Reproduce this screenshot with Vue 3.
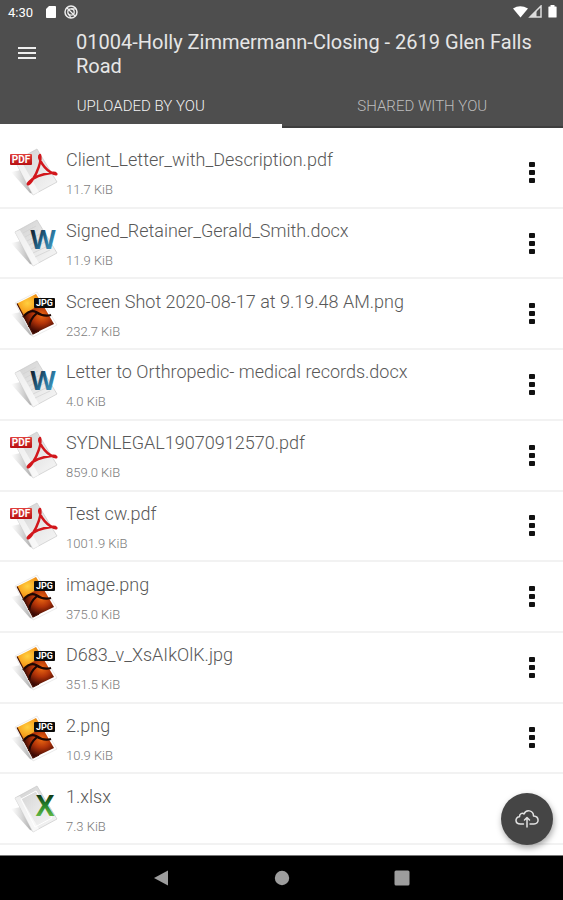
<script setup>
import { ref } from 'vue'

const activeTab = ref('uploaded')
const tabs = [
  { id: 'uploaded', label: 'UPLOADED BY YOU' },
  { id: 'shared', label: 'SHARED WITH YOU' },
]

const files = [
  { name: 'Client_Letter_with_Description.pdf', size: '11.7 KiB', kind: 'pdf' },
  { name: 'Signed_Retainer_Gerald_Smith.docx', size: '11.9 KiB', kind: 'doc' },
  { name: 'Screen Shot 2020-08-17 at 9.19.48 AM.png', size: '232.7 KiB', kind: 'image' },
  { name: 'Letter to Orthropedic- medical records.docx', size: '4.0 KiB', kind: 'doc' },
  { name: 'SYDNLEGAL19070912570.pdf', size: '859.0 KiB', kind: 'pdf' },
  { name: 'Test cw.pdf', size: '1001.9 KiB', kind: 'pdf' },
  { name: 'image.png', size: '375.0 KiB', kind: 'image' },
  { name: 'D683_v_XsAIkOlK.jpg', size: '351.5 KiB', kind: 'image' },
  { name: '2.png', size: '10.9 KiB', kind: 'image' },
  { name: '1.xlsx', size: '7.3 KiB', kind: 'sheet', noMenu: true },
]
</script>

<template>
  <div class="screen">
    <svg class="defs" width="0" height="0" aria-hidden="true">
      <defs>
        <linearGradient id="paper" x1="0" y1="0" x2="1" y2="1">
          <stop offset="0" stop-color="#cfcfcf" />
          <stop offset="0.5" stop-color="#e6e6e6" />
          <stop offset="1" stop-color="#f8f8f8" />
        </linearGradient>
        <linearGradient id="shade" x1="0" y1="0" x2="1" y2="0">
          <stop offset="0" stop-color="#999" stop-opacity="0" />
          <stop offset="1" stop-color="#777" stop-opacity="0.7" />
        </linearGradient>
        <linearGradient id="red" x1="0" y1="0" x2="0" y2="1">
          <stop offset="0" stop-color="#e0403c" />
          <stop offset="1" stop-color="#b80f12" />
        </linearGradient>
        <linearGradient id="blue" x1="0" y1="0" x2="1" y2="1">
          <stop offset="0.2" stop-color="#14283a" />
          <stop offset="0.55" stop-color="#266f98" />
          <stop offset="0.9" stop-color="#49a6cb" />
        </linearGradient>
        <linearGradient id="green" x1="0" y1="0" x2="0" y2="1">
          <stop offset="0.25" stop-color="#123c18" />
          <stop offset="0.5" stop-color="#22822a" />
          <stop offset="0.8" stop-color="#62b845" />
        </linearGradient>
        <radialGradient id="sunset" cx="0.4" cy="0.4" r="0.75">
          <stop offset="0" stop-color="#ffd040" />
          <stop offset="0.5" stop-color="#f8a01c" />
          <stop offset="1" stop-color="#c4560d" />
        </radialGradient>
        <radialGradient id="ember" cx="0.6" cy="0.35" r="0.6">
          <stop offset="0" stop-color="#ee6a12" />
          <stop offset="0.5" stop-color="#b03208" />
          <stop offset="1" stop-color="#3a0803" />
        </radialGradient>
      </defs>
    </svg>

    <header class="header">
      <div class="status">
        <span class="time">4:30</span>
        <svg class="sd" width="12" height="14" viewBox="0 0 12 14"><path d="M4 1h6.200q.8 0 .8.800v10.400q0 .8-.8.800H1.800q-.8 0-.8-.8V4z" fill="#fff" /></svg>
        <svg width="14" height="14" viewBox="0 0 14 14" fill="none" stroke="#eee">
          <circle cx="7" cy="7" r="6" stroke-width="1.500" />
          <circle cx="7" cy="7" r="3.200" stroke-width="1.300" />
          <path d="M3 3l8 8M7 3.800h5M4.200 8.500L7 13" stroke-width="1.200" />
        </svg>
        <span class="spacer"></span>
        <svg width="44" height="14" viewBox="0 0 44 14">
          <path d="M0 3.500Q7 -1 15 3.500L7.500 12.500z" fill="#fff" />
          <path d="M17 12L28 1v11z" fill="none" stroke="#ddd" stroke-width="1.500" />
          <path d="M17 12L23.500 5.500V12z" fill="#ddd" />
          <path d="M36 1.500h1.500V0h4v1.500H43q.6 0 .6.600V12q0 .6-.6.600h-7q-.6 0-.6-.6V2.100q0-.6.600-.6z" fill="#fff" />
        </svg>
      </div>
      <div class="bar">
        <button class="menu" type="button" aria-label="Menu">
          <span></span><span></span><span></span>
        </button>
        <h1 class="title">01004-Holly Zimmermann-Closing - 2619 Glen Falls Road</h1>
      </div>
      <nav class="tabs">
        <button
          v-for="tab in tabs"
          :key="tab.id"
          type="button"
          class="tab"
          :class="{ active: tab.id === activeTab }"
          @click="activeTab = tab.id"
        >{{ tab.label }}</button>
      </nav>
    </header>

    <main class="content">
      <ul class="list">
        <li v-for="file in files" :key="file.name" class="row">
          <svg class="file-icon" width="50" height="50" viewBox="0 0 50 50" aria-hidden="true">
            <path d="M2 25L12 23L25 47L21 46z" fill="url(#shade)" />
            <template v-if="file.kind === 'image'">
              <path d="M6 14L28 3L48 36L24 48z" fill="#fff" stroke="#ddd" stroke-width="0.600" />
              <path d="M8 14.500L27 5L34 16L15 28z" fill="url(#sunset)" />
              <path d="M14 27Q24 18 34 16L45 35L24 45z" fill="url(#ember)" />
              <path d="M14 28Q21 20 27 23Q34 28 42 26M28 24Q21 30 20 38" fill="none" stroke="#1d0703" stroke-width="2.200" />
              <path d="M8 14.500L24 45L30 42" fill="none" stroke="#4a1306" stroke-width="1.200" />
              <rect x="25" y="9" width="21" height="10" rx="1" fill="#0b0b0b" />
              <text x="35.500" y="17" class="tag">JPG</text>
            </template>
            <template v-else>
              <path d="M6 14L28 2L48 35L24 48z" fill="url(#paper)" stroke="#c9c9c9" stroke-width="0.700" />
              <path d="M6 14L24 48L30 45L11 12z" fill="#fff" opacity="0.600" />
              <path v-if="file.kind === 'doc'" d="M14 15L27 8M16 19L29 12M18 23L31 16M20 27L33 20M22 31L36 24M24 35L39 28M26 39L41 32" stroke="#d0d0d0" stroke-width="0.700" />
              <path v-if="file.kind === 'sheet'" d="M12 15L27 7L43 34L26 43z" fill="none" stroke="#fff" stroke-width="1" />
            </template>
            <template v-if="file.kind === 'pdf'">
              <rect x="1" y="7" width="22" height="11" rx="1" fill="url(#red)" />
              <text x="12" y="16" class="tag pdf">PDF</text>
              <path d="M31 8C28 10 35 23 45 27C49 28.500 48 25 42 26C34 27 25 30 20 35C17 38 20 39 24 32C28 26 33 14 31 8z" fill="none" stroke="#d2171c" stroke-width="2.400" stroke-linejoin="round" />
            </template>
            <text v-if="file.kind === 'doc'" x="34" y="31" class="letter word">W</text>
            <text v-if="file.kind === 'sheet'" x="36" y="32" class="letter excel">X</text>
          </svg>
          <div class="info">
            <span class="name">{{ file.name }}</span>
            <span class="size">{{ file.size }}</span>
          </div>
          <button v-if="!file.noMenu" class="more" type="button" :aria-label="'Options for ' + file.name">
            <span></span><span></span><span></span>
          </button>
        </li>
      </ul>
      <button class="fab" type="button" aria-label="Upload">
        <svg width="24" height="20" viewBox="0 0 24 20" fill="none" stroke="#e2e2e2" stroke-width="1.500" stroke-linecap="round" stroke-linejoin="round">
          <path d="M8.500 15H5.500C-.5 15-.2 7.800 4.500 7.800C4.300 4.500 7.500 3.600 9 5C11 0 18.500 1 18.500 7C24.500 7.300 24.500 15 19 15H15" />
          <path d="M12 18V9M9.500 11L12 8.500L14.500 11" />
        </svg>
      </button>
    </main>

    <footer class="navbar">
      <button type="button" aria-label="Back"><svg width="16" height="16" viewBox="0 0 16 16"><path d="M0 8L14 .5v15z" fill="#9d9d9d" /></svg></button>
      <button type="button" aria-label="Home"><svg width="16" height="16" viewBox="0 0 16 16"><circle cx="8" cy="8" r="7.200" fill="#9d9d9d" /></svg></button>
      <button type="button" aria-label="Recent apps"><svg width="16" height="16" viewBox="0 0 16 16"><rect x="0.500" y="0.500" width="15" height="15" rx="1.500" fill="#9d9d9d" /></svg></button>
    </footer>
  </div>
</template>

<style>
body {
  margin: 0;
  background: #fff;
}
</style>

<style scoped>
.screen {
  display: flex;
  flex-direction: column;
  min-height: 100vh;
  font-family: Roboto, "Liberation Sans", sans-serif;
  background: #fff;
}
.defs {
  position: absolute;
}
button {
  padding: 0;
  border: 0;
  background: none;
  font: inherit;
  color: inherit;
  cursor: pointer;
}
.header {
  background: #4e4e4e;
  color: #e6e6e6;
}
.status {
  display: flex;
  align-items: center;
  height: 24px;
  padding: 0 6px 0 8px;
}
.time {
  width: 37px;
  font-size: 13px;
  color: #fff;
}
.sd {
  margin-right: 7px;
}
.spacer {
  flex: 1;
}
.bar {
  display: flex;
  align-items: flex-start;
  padding: 6px 16px 8px 18px;
}
.menu {
  display: flex;
  flex-direction: column;
  gap: 3px;
  width: 18px;
  margin: 17px 40px 0 0;
}
.menu span {
  height: 2px;
  background: #eee;
}
.title {
  flex: 1;
  margin: 0;
  font-size: 20px;
  line-height: 24px;
  font-weight: 400;
}
.tabs {
  display: flex;
}
.tab {
  flex: 1;
  height: 42px;
  border-bottom: 2px solid #3e3e3e;
  font-size: 15px;
  font-weight: 300;
  color: #bdbdbd;
}
.tab.active {
  padding-top: 2px;
  border-bottom: 4px solid #fff;
  color: #f2f2f2;
}
.content {
  position: relative;
  display: flex;
  flex: 1;
  flex-direction: column;
}
.list {
  display: flex;
  flex: 1;
  flex-direction: column;
  margin: 0;
  padding: 10px 0;
  list-style: none;
}
.row {
  display: flex;
  flex: 1;
  align-items: center;
  box-sizing: border-box;
  min-height: 60px;
  padding: 0 27px 0 9px;
  border-bottom: 2px solid #f2f2f2;
}
.file-icon {
  flex: none;
}
.tag {
  font-size: 9px;
  font-weight: 700;
  fill: #fff;
  text-anchor: middle;
}
.pdf {
  font-size: 10px;
}
.letter {
  font-family: "Open Sans", sans-serif;
  font-weight: 700;
  text-anchor: middle;
}
.word {
  font-size: 26px;
  fill: url(#blue);
}
.excel {
  font-size: 28px;
  fill: url(#green);
}
.info {
  display: flex;
  flex: 1;
  flex-direction: column;
  gap: 10px;
  padding: 2px 0 0 7px;
  font-weight: 300;
}
.name {
  font-size: 18px;
  line-height: 24px;
  color: #585858;
}
.size {
  font-size: 13px;
  line-height: 16px;
  color: #7c7c7c;
}
.more {
  display: flex;
  flex-direction: column;
  align-items: center;
  gap: 3px;
  width: 8px;
}
.more span {
  width: 6px;
  height: 5px;
  border-radius: 1px;
  background: #111;
}
.fab {
  position: absolute;
  right: 10px;
  bottom: 10px;
  display: flex;
  align-items: center;
  justify-content: center;
  width: 52px;
  height: 52px;
  border-radius: 50%;
  background: #454545;
  box-shadow: 1px 3px 6px rgba(0, 0, 0, 0.35);
}
.navbar {
  display: flex;
  align-items: center;
  justify-content: center;
  gap: 104px;
  height: 44px;
  border-top: 1px solid #777;
  background: #000;
}
.navbar button {
  display: flex;
}
</style>
